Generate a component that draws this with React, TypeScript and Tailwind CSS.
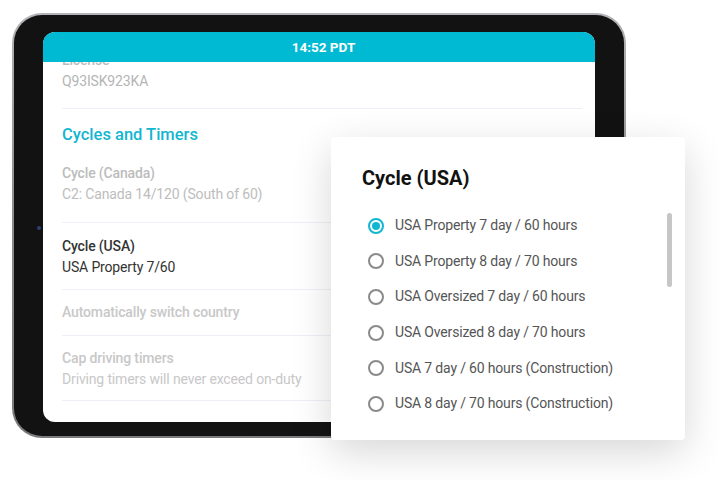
import React from "react";

const font = { fontFamily: "Roboto, 'Noto Sans', sans-serif" };

function Radio({ selected }: { selected?: boolean }) {
  return selected ? (
    <span className="flex h-[16px] w-[16px] items-center justify-center rounded-full border-2 border-[#10b7d1]">
      <span className="h-[8px] w-[8px] rounded-full bg-[#10b7d1]" />
    </span>
  ) : (
    <span className="h-[16px] w-[16px] rounded-full border-2 border-[#8a8a8a]" />
  );
}

const options = [
  "USA Property 7 day / 60 hours",
  "USA Property 8 day / 70 hours",
  "USA Oversized 7 day / 60 hours",
  "USA Oversized 8 day / 70 hours",
  "USA 7 day / 60 hours (Construction)",
  "USA 8 day / 70 hours (Construction)",
];

export default function App() {
  return (
    <div className="relative h-[480px] w-[720px] overflow-hidden bg-white" style={font}>
      <div className="pl-[12px] pt-[13px]">
        {/* Tablet */}
        <div className="relative h-[425px] w-[614px] rounded-[30px] bg-gradient-to-b from-[#b4b4b8] via-[#8c8c90] to-[#7a7a7e] p-[2px]">
          <div className="h-full w-full rounded-[28px] bg-[#121212] pb-[14px] pl-[29px] pr-[29px] pt-[17px]">
            <div className="flex h-full w-full flex-col overflow-hidden rounded-[12px] bg-white">
              <div className="relative z-10 flex h-[30px] shrink-0 items-center justify-center bg-[#00bad3] pl-[9px] text-[13.5px] font-bold text-white">
                14:52 PDT
              </div>
              <div className="min-h-0 flex-1 overflow-hidden pl-[19px] pr-[13px] tracking-[-0.15px]">
                <div className="-mt-[12px]">
                  <div className="pb-[16px]">
                    <div className="h-[21px] text-[14px] font-medium leading-[21px] text-[#bdbdbd]">License</div>
                    <div className="h-[21px] text-[14px] leading-[21px] text-[#b5b5b5]">Q93ISK923KA</div>
                  </div>
                  <div className="h-px bg-[#eef0f7]" />
                  <div className="pt-[14px] text-[16.5px] font-medium leading-[24px] tracking-normal text-[#12b6d0]">
                    Cycles and Timers
                  </div>
                  <div className="pb-[17px] pt-[16px]">
                    <div className="h-[21px] text-[14px] font-medium leading-[21px] text-[#bcbcbc]">Cycle (Canada)</div>
                    <div className="h-[21px] text-[14px] leading-[21px] text-[#bdbdbd]">C2: Canada 14/120 (South of 60)</div>
                  </div>
                  <div className="h-px bg-[#eef0f7]" />
                  <div className="pb-[11px] pt-[13px]">
                    <div className="h-[21px] text-[14px] font-medium leading-[21px] text-[#333333]">Cycle (USA)</div>
                    <div className="h-[21px] text-[14px] leading-[21px] text-[#333333]">USA Property 7/60</div>
                  </div>
                  <div className="h-px bg-[#eef0f7]" />
                  <div className="pb-[12px] pt-[12px]">
                    <div className="h-[21px] text-[14px] font-medium leading-[21px] text-[#c8c8c8]">Automatically switch country</div>
                  </div>
                  <div className="h-px bg-[#eef0f7]" />
                  <div className="pb-[10px] pt-[12px]">
                    <div className="h-[21px] text-[14px] font-medium leading-[21px] text-[#c8c8c8]">Cap driving timers</div>
                    <div className="h-[21px] text-[14px] leading-[21px] text-[#c8c8c8]">Driving timers will never exceed on-duty</div>
                  </div>
                  <div className="h-px bg-[#eef0f7]" />
                </div>
              </div>
            </div>
          </div>
          {/* camera */}
          <div className="absolute left-[25px] top-[213px] h-[4px] w-[4px] rounded-full bg-[#2c3f78]" />
        </div>
      </div>

      {/* Dialog */}
      <div className="absolute left-[331px] top-[137px] h-[303px] w-[354px] rounded-[4px] bg-white shadow-[0_12px_40px_rgba(0,0,0,0.16)]">
        <div className="pl-[31px] pt-[27px] text-[20px] font-bold leading-[28px] text-[#111111]">Cycle (USA)</div>
        <div className="pt-[16px]">
          {options.map((o, i) => (
            <div key={o} className="flex h-[35.6px] items-center pl-[37px]">
              <Radio selected={i === 0} />
              <span className="ml-[11px] text-[14px] tracking-[-0.17px] text-[#555555]">{o}</span>
            </div>
          ))}
        </div>
        <div className="absolute left-[336px] top-[76px] h-[74px] w-[5px] rounded-full bg-[#c6c6c6]" />
      </div>
    </div>
  );
}
